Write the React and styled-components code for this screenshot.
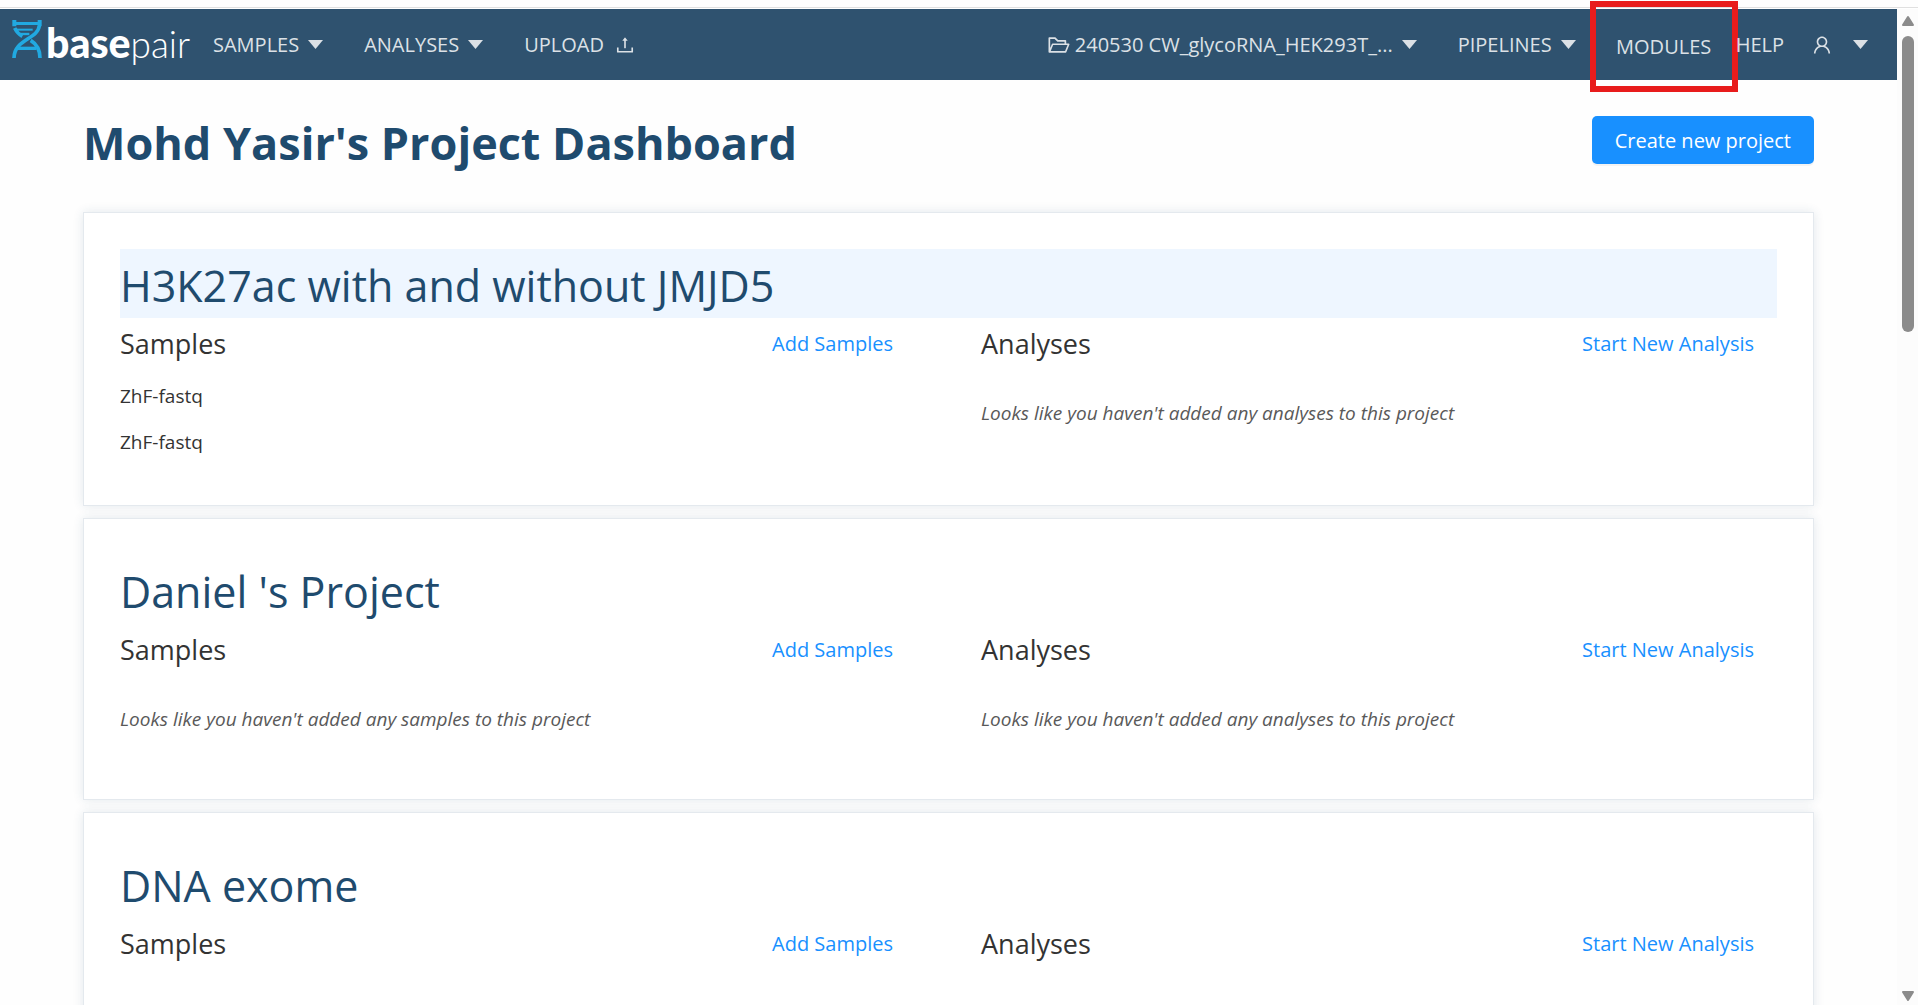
import styled, { createGlobalStyle } from "styled-components";
import {
  AiOutlineFolderOpen,
  AiOutlineUpload,
  AiOutlineUser,
} from "react-icons/ai";

const projects = [
  {
    name: "H3K27ac with and without JMJD5",
    samples: ["ZhF-fastq", "ZhF-fastq"],
    active: true,
  },
  { name: "Daniel 's Project", samples: [] },
  { name: "DNA exome", samples: [] },
];

function Logo() {
  return (
    <Brand href="#home">
      <svg width="30" height="38" viewBox="0 0 90 114" fill="none" stroke="#21a9e1">
        <path d="M1 0h12v6h64v-6h12v19h-12v-4h-64v4h-12z" fill="#21a9e1" stroke="none" />
        <path d="M10 29h52" strokeWidth="6" />
        <path d="M22 42h30" strokeWidth="7" />
        <path d="M82 17C78 58 6 58 6 114" strokeWidth="11" />
        <path d="M8 24C14 36 20 43 31 49M56 61C74 72 84 88 84 114" strokeWidth="11" />
        <path d="M18 85h56" strokeWidth="10" />
      </svg>
      <BrandName>
        <b>base</b>pair
      </BrandName>
    </Brand>
  );
}

function Caret() {
  return (
    <svg width="15" height="9" viewBox="0 0 15 9">
      <path d="M0 0h15L7.500 9z" fill="currentColor" />
    </svg>
  );
}

function Project({ project }) {
  return (
    <Card>
      <ProjectName $active={project.active}>{project.name}</ProjectName>
      <Columns>
        <section>
          <ColumnHeader>
            <h3>Samples</h3>
            <a href="#add-samples">Add Samples</a>
          </ColumnHeader>
          {project.samples.length !== 0 ? (
            <SampleList>
              {project.samples.map((sample, index) => (
                <li key={index}>{sample}</li>
              ))}
            </SampleList>
          ) : (
            <Empty>Looks like you haven't added any samples to this project</Empty>
          )}
        </section>
        <section>
          <ColumnHeader>
            <h3>Analyses</h3>
            <a href="#new-analysis">Start New Analysis</a>
          </ColumnHeader>
          <Empty>Looks like you haven't added any analyses to this project</Empty>
        </section>
      </Columns>
    </Card>
  );
}

function App() {
  return (
    <Page>
      <GlobalStyle />
      <TopLine />
      <Body>
        <Content>
          <Nav>
            <Logo />
            <NavGroup>
              <NavButton>
                SAMPLES <Caret />
              </NavButton>
              <NavButton>
                ANALYSES <Caret />
              </NavButton>
              <NavLink href="#upload">
                UPLOAD <AiOutlineUpload size={22} />
              </NavLink>
            </NavGroup>
            <NavGroup $end>
              <NavButton>
                <ProjectLabel>
                  <AiOutlineFolderOpen size={24} />
                  240530 CW_glycoRNA_HEK293T_...
                </ProjectLabel>
                <Caret />
              </NavButton>
              <NavButton>
                PIPELINES <Caret />
              </NavButton>
            </NavGroup>
            <MarkedLink href="#modules">MODULES</MarkedLink>
            <UserGroup>
              <NavLink href="#help">HELP</NavLink>
              <UserButton aria-label="Account">
                <AiOutlineUser size={22} />
                <Caret />
              </UserButton>
            </UserGroup>
          </Nav>
          <Main>
            <TitleRow>
              <h1>Mohd Yasir's Project Dashboard</h1>
              <CreateButton>Create new project</CreateButton>
            </TitleRow>
            {projects.map((project) => (
              <Project key={project.name} project={project} />
            ))}
          </Main>
        </Content>
        <Scrollbar>
          <svg width="14" height="12" viewBox="0 0 14 12">
            <path d="M7 2L12 10H2z" fill="#8b8b8b" stroke="#8b8b8b" strokeWidth="2" strokeLinejoin="round" />
          </svg>
          <Thumb />
          <svg width="14" height="12" viewBox="0 0 14 12">
            <path d="M7 10L12 2H2z" fill="#8b8b8b" stroke="#8b8b8b" strokeWidth="2" strokeLinejoin="round" />
          </svg>
        </Scrollbar>
      </Body>
    </Page>
  );
}

const GlobalStyle = createGlobalStyle`
  * {
    box-sizing: border-box;
  }

  body {
    margin: 0;
    background: #fefefe;
    font-family: "Open Sans", "Noto Sans", sans-serif;
    font-size: 19px;
    color: #333333;
  }

  h1, h2, h3, p, ul {
    margin: 0;
    padding: 0;
    font-weight: 400;
  }

  a {
    text-decoration: none;
  }

  button {
    font-family: inherit;
    border: none;
    cursor: pointer;
  }
`;

const Page = styled.div`
  height: 100vh;
  display: flex;
  flex-direction: column;
  overflow: hidden;
`;

const TopLine = styled.div`
  flex: none;
  height: 9px;
  border-bottom: 1px solid #ffffff;
  box-shadow: inset 0 -1px 0 #e0e0e0;
`;

const Body = styled.div`
  flex: 1;
  min-height: 0;
  display: flex;
`;

const Content = styled.div`
  flex: 1;
  min-width: 0;
`;

const Nav = styled.nav`
  height: 71px;
  padding: 0 29px 0 12px;
  display: flex;
  align-items: center;
  background: #2f526f;
`;

const Brand = styled.a`
  display: flex;
  align-items: baseline;
  gap: 4px;
  width: 201px;
  padding-bottom: 2px;
  color: #ffffff;
`;

const BrandName = styled.span`
  font-family: "Lato", sans-serif;
  font-size: 37px;
  font-weight: 300;
  line-height: 48px;

  b {
    font-size: 41px;
    font-weight: 900;
  }
`;

const NavGroup = styled.div`
  display: flex;
  align-items: center;
  gap: 41px;
  margin-left: ${(props) => (props.$end ? "auto" : "0")};
`;

const NavButton = styled.button`
  display: flex;
  align-items: center;
  gap: 9px;
  padding: 0;
  background: none;
  font-size: 20px;
  line-height: 28px;
  white-space: nowrap;
  color: #dce1e6;
`;

const NavLink = styled.a`
  display: flex;
  align-items: center;
  gap: 10px;
  font-size: 20px;
  line-height: 28px;
  color: #dce1e6;
`;

const ProjectLabel = styled.span`
  display: flex;
  align-items: center;
  gap: 4px;
`;

const MarkedLink = styled(NavLink)`
  flex: none;
  justify-content: center;
  width: 148px;
  height: 91px;
  margin: 4px -2px 0 14px;
  border: 6px solid #e81c1c;
`;

const UserGroup = styled.div`
  display: flex;
  align-items: center;
  gap: 27px;
`;

const UserButton = styled(NavButton)`
  gap: 20px;
`;

const Main = styled.main`
  padding: 36px 83px 0;
`;

const TitleRow = styled.div`
  display: flex;
  align-items: flex-start;
  justify-content: space-between;
  height: 96px;

  h1 {
    font-size: 45px;
    font-weight: 700;
    line-height: 54px;
    color: #1f4b6e;
  }
`;

const CreateButton = styled.button`
  height: 48px;
  padding: 0 23px;
  border-radius: 5px;
  background: #1890ff;
  box-shadow: 0 2px 0 #f3f3f3;
  font-size: 20px;
  color: #ffffff;
`;

const Card = styled.article`
  padding: 36px;
  margin-bottom: 12px;
  background: #ffffff;
  border: 1px solid #e4e9ee;
  box-shadow: 0 0 10px rgba(31, 75, 110, 0.12);
`;

const ProjectName = styled.h2`
  padding-top: 5px;
  font-size: 43px;
  line-height: 64px;
  color: #1f4b6e;
  background: ${(props) => (props.$active ? "#eef6ff" : "transparent")};
`;

const Columns = styled.div`
  display: grid;
  grid-template-columns: 1fr 1fr;
  gap: 65px;
`;

const ColumnHeader = styled.div`
  display: flex;
  align-items: center;
  justify-content: space-between;
  height: 50px;
  padding-right: 23px;

  h3 {
    font-size: 27px;
  }

  a {
    font-size: 20px;
    color: #1890ff;
  }
`;

const SampleList = styled.ul`
  padding: 5px 0 4px;
  list-style: none;
  line-height: 46px;
`;

const Empty = styled.p`
  padding: 32px 0 30px;
  font-style: italic;
  line-height: 27px;
  color: #595959;
`;

const Scrollbar = styled.div`
  display: flex;
  flex-direction: column;
  align-items: center;
  width: 21px;
  padding: 6px 0 3px;
  background: #fcfcfc;

  svg:last-child {
    margin-top: auto;
  }
`;

const Thumb = styled.div`
  width: 12px;
  height: 30%;
  margin-top: 9px;
  border-radius: 6px;
  background: #8b8b8b;
`;

export default App;
